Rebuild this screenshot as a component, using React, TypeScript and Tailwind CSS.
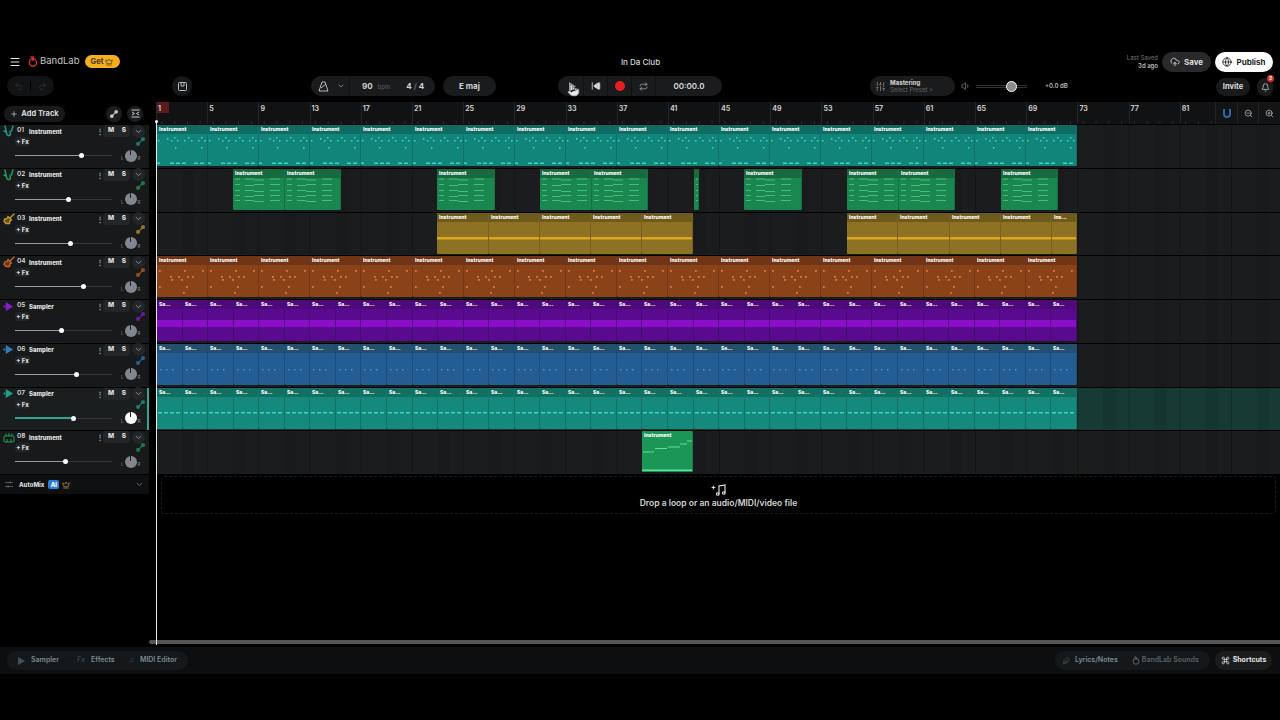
import React from 'react';
import {
  Bell, ChevronDown, Command, Crown, Feather, Menu, Plus, Pointer, Redo2, Repeat, SkipBack,
  Undo2, Volume1, ZoomIn, ZoomOut, CloudUpload, Globe, SlidersVertical,
} from 'lucide-react';

const BAR = 51.1;
const BEAT = 25.55;

type Kind = 'teal' | 'green' | 'yellow' | 'orange' | 'purple' | 'blue' | 'mint' | 'solo';

interface ClipData {
  left: number;
  width: number;
}

const styles: Record<Kind, { body: string; head: string; label: string }> = {
  teal: { body: 'bg-[#12857b]', head: 'bg-[#0f6c64]', label: 'Instrument' },
  green: { body: 'bg-[#1a8750]', head: 'bg-[#176a40]', label: 'Instrument' },
  yellow: { body: 'bg-[#8c7222]', head: 'bg-[#6e5a1b]', label: 'Instrument' },
  orange: { body: 'bg-[#8a4219]', head: 'bg-[#6f3516]', label: 'Instrument' },
  purple: { body: 'bg-[#590a8e]', head: 'bg-[#4d0a78]', label: 'Sa...' },
  blue: { body: 'bg-[#235d93]', head: 'bg-[#244f6e]', label: 'Sa...' },
  mint: { body: 'bg-[#14897c]', head: 'bg-[#126f61]', label: 'Sa...' },
  solo: { body: 'bg-[#1c9657]', head: 'bg-[#1c9657]', label: 'Instrument' },
};

// whole pixels, so neighbouring clips never leave a seam of the lane showing
function row(count: number, width: number): ClipData[] {
  return Array.from({ length: count }, (_, i) => {
    const left = Math.round(1 + i * width);
    return { left, width: Math.round(1 + (i + 1) * width) - left };
  });
}

// clip edges as read off the ruler, in page pixels
const xs = (pairs: [number, number][]): ClipData[] => pairs.map(([a, b]) => ({ left: a - 156, width: b - a }));

const tracks: { num: string; name: string; kind: Kind; pos: number; color: string; clips: ClipData[] }[] = [
  { num: '01', name: 'Instrument', kind: 'teal', pos: 66, color: '#1f9e8f', clips: row(18, BAR) },
  {
    num: '02', name: 'Instrument', kind: 'green', pos: 53, color: '#22a060',
    clips: xs([[233, 285], [285, 341], [437, 495], [540, 592], [592, 648], [694, 699], [744, 802], [847, 899], [899, 955], [1001, 1058]]),
  },
  {
    num: '03', name: 'Instrument', kind: 'yellow', pos: 55, color: '#c89a2c',
    clips: xs([[437, 489], [489, 540], [540, 591], [591, 642], [642, 693], [847, 898], [898, 950], [950, 1001], [1001, 1052], [1052, 1077]]),
  },
  { num: '04', name: 'Instrument', kind: 'orange', pos: 68, color: '#c8622a', clips: row(18, BAR) },
  { num: '05', name: 'Sampler', kind: 'purple', pos: 46, color: '#8a1bd0', clips: row(36, BEAT) },
  { num: '06', name: 'Sampler', kind: 'blue', pos: 61, color: '#2f7fbf', clips: row(36, BEAT) },
  { num: '07', name: 'Sampler', kind: 'mint', pos: 58, color: '#1f9e8f', clips: row(36, BEAT) },
  { num: '08', name: 'Instrument', kind: 'solo', pos: 50, color: '#22a060', clips: xs([[642, 693]]) },
];

const tealDots = [[1, 15], [10, 13], [14, 15], [17, 12], [20, 15], [27, 15], [31, 12], [34, 15], [41, 15], [44, 12], [47, 15], [18, 22], [44, 22]];
const tealDashes = [[0, 3], [13, 4], [19, 4], [25, 4], [37, 4], [43, 4]];
const orangeDots = [[2, 14], [27, 14], [45, 14], [13, 20], [21, 20], [30, 20], [35, 20], [14, 23], [24, 23], [2, 30], [29, 30], [26, 36]];
const greenRows = [9.5, 15, 21, 26, 31];

function Notes({ kind, width }: { kind: Kind; width: number }) {
  if (kind === 'teal') {
    return (
      <g fill="#3fd3c3">
        {tealDots.map(([x, y], i) => <rect key={i} x={x} y={y} width={1.5} height={1.5} />)}
        {tealDashes.map(([x, w], i) => <rect key={i} x={x} y={37.5} width={w} height={1.5} />)}
      </g>
    );
  }
  if (kind === 'green') {
    return (
      <g fill="#46bd7c">
        {greenRows.map((y, i) => (
          <g key={y}>
            <rect x={2} y={y} width={5} height={1} />
            <rect x={12} y={y + (i % 2)} width={9} height={1} />
            <rect x={21} y={y + 1 - (i % 2)} width={10} height={1} />
            <rect x={37} y={y} width={10} height={1} />
          </g>
        ))}
      </g>
    );
  }
  if (kind === 'yellow') return <rect x={0} y={24} width={width} height={2.5} fill="#dca81f" />;
  if (kind === 'orange') {
    return <g fill="#de7a3e">{orangeDots.map(([x, y], i) => <rect key={i} x={x} y={y} width={1.8} height={1.8} />)}</g>;
  }
  if (kind === 'purple') return <rect x={0} y={20} width={width} height={7} fill="#8a10c8" />;
  if (kind === 'blue') {
    return <g fill="#4d93cc">{[3, 9, 15].map(x => <rect key={x} x={x} y={25} width={1.5} height={1.5} />)}</g>;
  }
  if (kind === 'mint') {
    return <g fill="#35d6c2">{[1, 7, 13, 19].map(x => <rect key={x} x={x} y={24} width={4} height={1.5} />)}</g>;
  }
  return (
    <g fill="#5fe09a">
      <rect x={1} y={20.5} width={11} height={1} />
      <rect x={13} y={17} width={12} height={1} />
      <rect x={26} y={15.5} width={12} height={1} />
      <rect x={38} y={12.5} width={7} height={1} />
      <rect x={45} y={9.5} width={6} height={1} />
      <rect x={0} y={38.5} width={width} height={1.5} />
    </g>
  );
}

function Clip({ kind, clip }: { kind: Kind; clip: ClipData }) {
  const s = styles[kind];
  let label = s.label;
  if (clip.width < 10) label = '';
  else if (clip.width < 30 && label === 'Instrument') label = 'Ins...';
  return (
    <div
      className={`absolute top-0 h-[41px] overflow-hidden rounded-[1px] border-r border-black/15 ${s.body}`}
      style={{ left: clip.left, width: clip.width }}
    >
      <div className={`h-[9px] pl-[2px] text-[5px] leading-[9px] font-extrabold text-white whitespace-nowrap ${s.head}`}>
        {label}
      </div>
      <svg className="absolute inset-0 w-full h-full">
        <Notes kind={kind} width={clip.width} />
      </svg>
    </div>
  );
}

function AutomationIcon({ color, size = 9 }: { color: string; size?: number }) {
  return (
    <svg width={size} height={size} viewBox="0 0 12 12" fill="none" stroke={color} strokeWidth="1.6" strokeLinecap="round">
      <rect x="1" y="7.5" width="3.5" height="3.5" rx="1" fill={color} />
      <rect x="7.5" y="1" width="3.5" height="3.5" rx="1" fill={color} />
      <path d="M4 8 L8 4" />
    </svg>
  );
}

function TrackIcon({ num, color }: { num: string; color: string }) {
  if (num === '05' || num === '06' || num === '07') {
    return (
      <svg width="11" height="11" viewBox="0 0 12 12" fill={color}>
        <path d="M3 1 L11 6 L3 11 Z" />
        <rect x="0.5" y="5" width="2" height="2" />
      </svg>
    );
  }
  if (num === '08') {
    return (
      <svg width="12" height="11" viewBox="0 0 12 11" fill="none" stroke={color} strokeWidth="1">
        <rect x="1" y="4" width="10" height="6" rx="1" />
        <path d="M3 4 V1.5 M6 4 V1 M9 4 V1.5 M4 7 V10 M8 7 V10" />
      </svg>
    );
  }
  if (num === '03' || num === '04') {
    return (
      <svg width="12" height="12" viewBox="0 0 12 12" fill="none" stroke={color} strokeWidth="1.3" strokeLinecap="round">
        <path d="M7 5 L11 1" />
        <path d="M5 3.5 L8.5 7 L7 8 L6.5 10.5 L3 10.5 L1 8.5 L1.5 6 L4 5.5 Z" fill={color} fillOpacity="0.45" />
      </svg>
    );
  }
  return (
    <svg width="11" height="12" viewBox="0 0 11 12" fill="none" stroke={color} strokeWidth="1.4" strokeLinecap="round">
      <path d="M2 1 L4 10 Q6 11.5 7.5 9.5 L7 6" />
      <path d="M10 1 L8.5 6" />
      <path d="M1 6 L3 7" />
    </svg>
  );
}

function TrackRow({ track }: { track: (typeof tracks)[number] }) {
  const selected = track.num === '07';
  return (
    <div className={`h-[43.75px] border-b border-black flex flex-col relative ${selected ? 'bg-[#1b1e1f]' : 'bg-[#17191a]'}`}>
      <div className="h-[12px] flex items-center pl-[3px]">
        <div className="w-[14px] flex-none"><TrackIcon num={track.num} color={track.color} /></div>
        <span className="w-[12px] flex-none text-[6.5px] font-semibold text-[#d8d8d8]">{track.num}</span>
        <span className="w-[67px] flex-none text-[6px] font-extrabold text-[#e4e4e4]">{track.name}</span>
        <span className="w-[7px] flex-none text-[8px] leading-none font-bold text-[#999]">⋮</span>
        <div className="w-[27px] h-[12px] flex-none rounded-[4px] bg-[#232628] pl-[1px] flex items-center justify-around text-[6.5px] font-extrabold text-[#e0e0e0]">
          <span>M</span>
          <span>S</span>
        </div>
        <div className="ml-[2px] w-[13px] h-[13px] flex-none rounded-full bg-[#232628] flex items-center justify-center">
          <ChevronDown size={9} strokeWidth={2} color="#aaa" />
        </div>
      </div>
      <div className="h-[9px] flex items-center pl-[15px]">
        <div className="w-[15px] h-[9px] rounded-[3px] bg-[#232628] text-center text-[6px] leading-[9px] font-extrabold text-[#ddd] whitespace-nowrap">+ Fx</div>
        <div className="ml-[106px] opacity-70"><AutomationIcon color={selected ? '#1f9e8f' : track.color} /></div>
      </div>
      <div className="h-[19px] flex items-center pl-[15px]">
        <div className="w-[97px] h-[1px] bg-[#33373a] relative">
          <div className={`absolute left-0 bottom-0 ${selected ? 'h-[2px] bg-[#2fa592]' : 'h-[1px] bg-[#9a9a9a]'}`} style={{ width: track.pos }} />
          <div className="absolute top-[-2px] w-[5px] h-[5px] rounded-full bg-white" style={{ left: track.pos - 2 }} />
        </div>
        <div className="ml-[9px] flex items-end gap-[1px] text-[4.5px] leading-none text-[#888]">
          <span>L</span>
          <div className={`w-[12px] h-[12px] rounded-full flex justify-center ${selected ? 'bg-white' : 'bg-[#82868e]'}`}>
            <div className="w-[1px] h-[5px] bg-[#222]" />
          </div>
          <span>R</span>
        </div>
      </div>
      {selected && <div className="absolute right-0 top-0 bottom-0 w-[2px] bg-[#2fa592]" />}
    </div>
  );
}

function Lane({ track }: { track: (typeof tracks)[number] }) {
  const selected = track.num === '07';
  return (
    <div
      className={`h-[43.75px] relative border-b border-black bg-[linear-gradient(90deg,#00000040_1px,transparent_1px,transparent_25.6px,#00000014_25.6px,#00000014_38.4px,transparent_38.4px)] bg-[length:51.2px_100%] ${selected ? 'bg-[#173b34]' : 'bg-[#1a1c1d]'}`}
    >
      {track.clips.map((clip, i) => <Clip key={i} kind={track.kind} clip={clip} />)}
    </div>
  );
}

function TopBar() {
  return (
    <div className="h-[23px] flex-none flex items-center relative">
      <Menu size={12} strokeWidth={2} color="#e5e5e5" className="ml-[9px]" />
      <svg className="ml-[7px]" width="10" height="11" viewBox="0 0 10 11" fill="none" stroke="#d8352e" strokeWidth="1.4">
        <circle cx="5" cy="6.5" r="3.7" />
        <path d="M2.5 1 H5 V5" />
      </svg>
      <span className="ml-[2px] text-[9.5px] text-[#c4c4c4]">BandLab</span>
      <div className="ml-[5px] w-[35px] h-[13px] rounded-full bg-[#f4b01e] flex items-center justify-center gap-[2px] text-[7.5px] font-bold text-[#4a3200]">
        Get <Crown size={8} strokeWidth={2} color="#4a3200" />
      </div>
      <span className="ml-[499px] w-[44px] text-center text-[8px] font-medium text-[#d8d8d8] whitespace-nowrap">In Da Club</span>
      <div className="ml-auto w-[60px] text-right text-[6px] leading-[8px] text-[#777]">
        Last Saved
        <div className="font-semibold text-[#bbb]">3d ago</div>
      </div>
      <div className="ml-[4px] w-[49px] h-[20px] rounded-full bg-[#29292b] flex items-center justify-center gap-[4px] text-[8px] font-bold text-[#ddd]">
        <CloudUpload size={10} strokeWidth={2} color="#ddd" />
        Save
      </div>
      <div className="ml-[4px] mr-[7px] w-[58px] h-[20px] rounded-full bg-white flex items-center justify-center gap-[4px] text-[8px] font-bold text-[#222]">
        <Globe size={10} strokeWidth={2} color="#222" />
        Publish
      </div>
    </div>
  );
}

function Toolbar() {
  return (
    <div className="h-[29px] flex-none flex items-start pt-[3px] relative">
      <div className="ml-[7px] w-[47px] h-[20px] flex-none rounded-full bg-[#121314] flex items-center">
        <div className="flex-1 flex justify-center border-r border-black"><Undo2 size={9} color="#333" /></div>
        <div className="flex-1 flex justify-center"><Redo2 size={9} color="#333" /></div>
      </div>
      <div className="ml-[118px] w-[20px] h-[20px] flex-none rounded-full bg-[#17181a] flex items-center justify-center">
        <svg width="9" height="9" viewBox="0 0 9 9" fill="none" stroke="#bbb" strokeWidth="1">
          <rect x="0.5" y="0.5" width="8" height="8" rx="1" />
          <path d="M3 1 V4 H6 V1" />
        </svg>
      </div>
      <div className="ml-[119px] w-[124px] h-[20px] flex-none rounded-full bg-[#1a1b1d] flex items-center text-[8px] font-bold text-[#d4d4d4]">
        <svg className="ml-[7px]" width="11" height="11" viewBox="0 0 11 11" fill="none" stroke="#bbb" strokeWidth="1">
          <path d="M4 1 H7 L10 10 H1 Z" />
          <path d="M3 7 L8 3" />
        </svg>
        <ChevronDown size={8} color="#aaa" className="ml-[8px]" />
        <div className="ml-[4px] h-[20px] w-[1px] bg-[#111]" />
        <span className="ml-[12px]">90</span>
        <span className="ml-[5px] text-[6px] font-medium text-[#555]">bpm</span>
        <span className="ml-[16px]">4 <span className="text-[#666]">/</span> 4</span>
      </div>
      <div className="ml-[8px] w-[53px] h-[20px] flex-none rounded-full bg-[#1a1b1d] flex items-center justify-center text-[8px] font-bold text-[#d4d4d4]">E maj</div>
      <div className="ml-[62px] w-[164px] h-[20px] flex-none rounded-full bg-[#1a1b1d] flex items-center">
        <div className="w-[26px] h-[20px] flex items-center justify-center border-r border-[#111] pl-[3px]">
          <svg width="8" height="9" viewBox="0 0 8 9" fill="#9a9a9a"><path d="M1 0 L8 4.5 L1 9 Z" /></svg>
        </div>
        <div className="w-[24px] h-[20px] flex items-center justify-center border-r border-[#111]">
          <SkipBack size={10} fill="#d4d4d4" color="#d4d4d4" />
        </div>
        <div className="w-[24px] h-[20px] flex items-center justify-center border-r border-[#111]">
          <div className="w-[10px] h-[10px] rounded-full bg-[#e3201f]" />
        </div>
        <div className="w-[24px] h-[20px] flex items-center justify-center border-r border-[#111]">
          <Repeat size={9} strokeWidth={2} color="#aaa" />
        </div>
        <span className="flex-1 text-center text-[8px] font-semibold text-[#d8d8d8]">00:00.0</span>
      </div>
      <div className="ml-[148px] w-[85px] h-[20px] flex-none rounded-full bg-[#1a1b1d] flex items-center">
        <SlidersVertical size={11} color="#777" className="ml-[5px]" />
        <div className="ml-[4px] text-[6px] leading-[7px]">
          <div className="font-extrabold text-[#c8c8c8]">Mastering</div>
          <div className="text-[#666]">Select Preset &gt;</div>
        </div>
      </div>
      <Volume1 size={10} color="#777" className="ml-[6px] mt-[5px] flex-none" />
      <div className="ml-[5px] w-[51px] h-[20px] flex-none flex items-center relative">
        <div className="w-full h-[3px] border-y border-[#333]" />
        <div className="absolute left-[30px] w-[11px] h-[11px] rounded-full bg-[#8d8d8d] border border-white" />
      </div>
      <span className="ml-[18px] w-[24px] h-[20px] flex-none text-[6px] leading-[20px] font-semibold text-[#bbb] whitespace-nowrap">+0.0 dB</span>
      <div className="ml-[147px] mt-[2px] w-[34px] h-[18px] flex-none rounded-full bg-[#1a1b1d] text-center text-[7.5px] leading-[18px] font-bold text-[#ddd]">Invite</div>
      <div className="ml-[7px] mt-[2px] w-[16px] h-[18px] flex-none rounded-full bg-[#1a1b1d] flex items-center justify-center relative">
        <Bell size={9} color="#ccc" />
        <div className="absolute right-[-1px] top-[-3px] w-[7px] h-[7px] rounded-full bg-[#d9342b] text-center text-[5px] leading-[7px] font-bold text-white">2</div>
      </div>
      <Pointer size={13} fill="#e8e8e8" color="#777" strokeWidth={1.2} className="absolute left-[567px] top-[11px]" />
    </div>
  );
}

function Ruler() {
  const labels = Array.from({ length: 22 }, (_, i) => i * 4 + 1);
  return (
    <div className="h-[23px] flex relative overflow-hidden bg-[#111213] border-b border-black bg-[linear-gradient(90deg,#2a2c2d_1px,transparent_1px)] bg-[length:12.8px_3px] bg-bottom bg-repeat-x">
      {labels.map(n => (
        <div key={n} className="w-[51.2px] flex-none border-l border-[#232526] pl-[1px] pt-[2px] text-[7px] leading-[9px] font-bold text-[#c8c8c8] relative">
          {n === 1 && <div className="absolute left-0 top-0 w-[12px] h-[11px] bg-[#5a1b20]" />}
          <span className="relative">{n}</span>
        </div>
      ))}
      <div className="absolute right-0 top-0 h-[22px] w-[65px] bg-[#131415] flex items-center">
        <div className="w-[22px] h-full flex items-center justify-center border-l border-[#222]">
          <svg width="8" height="9" viewBox="0 0 8 9" fill="none" stroke="#2a66a8" strokeWidth="2">
            <path d="M1 0 V5 A3 3 0 0 0 7 5 V0" />
          </svg>
        </div>
        <div className="w-[21px] h-full flex items-center justify-center border-l border-[#222]">
          <ZoomOut size={9} color="#bbb" />
        </div>
        <div className="w-[22px] h-full flex items-center justify-center border-l border-[#222]">
          <ZoomIn size={9} color="#bbb" />
        </div>
      </div>
    </div>
  );
}

function BottomBar() {
  return (
    <div className="h-[27px] flex-none bg-[#0c0e0f] flex items-center text-[7px] font-semibold">
      <div className="ml-[7px] w-[181px] h-[19px] rounded-full bg-[#14181a] flex items-center text-[#7d8a92]">
        <svg className="ml-[10px]" width="8" height="8" viewBox="0 0 8 8" fill="#4a5155"><path d="M1 0 L8 4 L1 8 Z" /></svg>
        <span className="ml-[6px]">Sampler</span>
        <span className="ml-[18px] italic font-normal text-[#4a5155]">Fx</span>
        <span className="ml-[6px]">Effects</span>
        <span className="ml-[14px] font-normal text-[#4a5155]">♫</span>
        <span className="ml-[6px]">MIDI Editor</span>
      </div>
      <div className="ml-auto w-[155px] h-[19px] rounded-full bg-[#14181a] flex items-center text-[#7d8a92]">
        <Feather size={8} color="#4a5155" className="ml-[7px]" />
        <span className="ml-[5px]">Lyrics/Notes</span>
        <svg className="ml-[14px]" width="8" height="9" viewBox="0 0 10 11" fill="none" stroke="#666" strokeWidth="1.2">
          <circle cx="5" cy="6.5" r="3.7" />
          <path d="M3 1 H5 V5" />
        </svg>
        <span className="ml-[2px] text-[#5b6267]">BandLab Sounds</span>
      </div>
      <div className="ml-[5px] mr-[8px] w-[57px] h-[19px] rounded-full bg-[#1a1c1e] flex items-center justify-center gap-[3px] font-bold text-[#e4e4e4]">
        <Command size={9} color="#e4e4e4" />
        Shortcuts
      </div>
    </div>
  );
}

export default function App() {
  return (
    <div className="w-[1280px] h-[720px] bg-black pt-[50px] pb-[46px] flex flex-col overflow-hidden font-['Inter','Liberation_Sans',sans-serif]">
      <TopBar />
      <Toolbar />
      <div className="flex-1 flex min-h-0 relative">
        <div className="w-[149px] flex-none flex flex-col">
          <div className="h-[23px] flex items-center">
            <div className="ml-[4px] w-[61px] h-[16px] rounded-full bg-[#17191a] flex items-center justify-center gap-[3px] text-[7.5px] font-bold text-[#d8d8d8]">
              <Plus size={8} strokeWidth={2} color="#ccc" />
              Add Track
            </div>
            <div className="ml-[41px] w-[16px] h-[16px] rounded-full bg-[#1b1d1e] flex items-center justify-center">
              <AutomationIcon color="#c8c8c8" size={8} />
            </div>
            <div className="ml-[5px] w-[16px] h-[16px] rounded-full bg-[#1b1d1e] flex items-center justify-center">
              <svg width="9" height="9" viewBox="0 0 9 9" fill="none" stroke="#c8c8c8" strokeWidth="1">
                <path d="M0.5 1 H8.5 M0.5 8 H8.5 M1 3 L3.5 4.5 L1 6 M8 3 L5.5 4.5 L8 6" />
              </svg>
            </div>
          </div>
          {tracks.map(t => <TrackRow key={t.num} track={t} />)}
          <div className="h-[19px] bg-[#0e0f10] flex items-center">
            <svg className="ml-[5px]" width="8" height="7" viewBox="0 0 8 7" stroke="#555" strokeWidth="1" fill="none">
              <path d="M0 1.5 H8 M0 5.5 H8 M5 0 V3 M3 4 V7" />
            </svg>
            <span className="ml-[6px] text-[6px] font-extrabold text-[#ddd]">AutoMix</span>
            <div className="ml-[4px] w-[11px] h-[9px] rounded-[2px] bg-[#2b7fdc] text-center text-[6px] leading-[9px] font-extrabold text-white">AI</div>
            <Crown size={8} color="#c29a3d" className="ml-[3px]" />
            <ChevronDown size={9} color="#888" className="ml-[65px]" />
          </div>
        </div>
        <div className="flex-1 min-w-0 pl-[7px] flex flex-col relative">
          <Ruler />
          {tracks.map(t => <Lane key={t.num} track={t} />)}
          <div className="mt-[1px] mr-[4px] ml-[5px] h-[38px] pt-[3px] rounded-[3px] border border-dashed border-[#1a1a1a] flex flex-col items-center justify-center">
            <div className="flex items-start text-white">
              <span className="text-[7px] leading-none font-bold">+</span>
              <svg width="10" height="12" viewBox="0 0 10 12" fill="none" stroke="#e8e8e8" strokeWidth="1.1">
                <path d="M3 10 V2 L9 1 V9" />
                <circle cx="1.8" cy="10" r="1.3" />
                <circle cx="7.8" cy="9" r="1.3" />
              </svg>
            </div>
            <span className="mt-[1px] text-[8.5px] font-semibold text-[#d4d4d4]">Drop a loop or an audio/MIDI/video file</span>
          </div>
          <div className="mt-auto mb-[3px] ml-[-7px] h-[4px] rounded-l-full bg-[#555]" />
          <div className="absolute left-[7px] top-[19px] bottom-[2px] w-[1px] bg-[#e8e8e8]" />
          <div className="absolute left-[6px] top-[18px] w-[3px] h-[3px] rounded-full bg-white" />
        </div>
      </div>
      <BottomBar />
    </div>
  );
}
